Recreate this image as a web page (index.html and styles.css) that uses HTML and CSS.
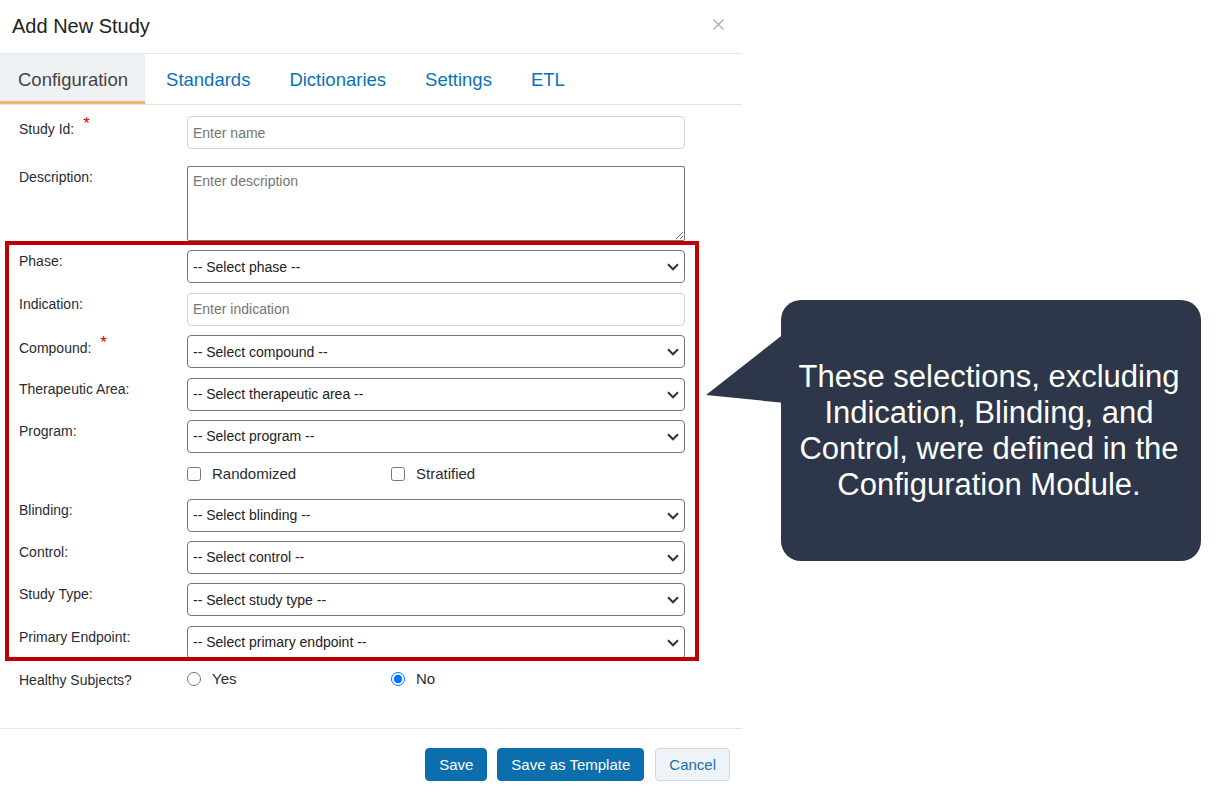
FILE: index.html
```html
<!DOCTYPE html>
<html lang="en">
<head>
  <meta charset="UTF-8" />
  <meta name="viewport" content="width=device-width, initial-scale=1.0" />
  <title>Add New Study</title>
  <link rel="stylesheet" href="styles.css">
</head>
<body>
  <div class="page">
    <div class="modal">
      <div class="modal-header">
        <h1 class="modal-title">Add New Study</h1>
        <button class="close" aria-label="Close">
          <svg width="11" height="11" viewBox="0 0 11 11"><path d="M0.5 0.5 L10.5 10.5 M10.5 0.5 L0.5 10.5" stroke="#a8a8a8" stroke-width="1.2" fill="none"/></svg>
        </button>
      </div>

      <nav class="tabs">
        <a href="#" class="tab active">Configuration</a>
        <a href="#" class="tab">Standards</a>
        <a href="#" class="tab">Dictionaries</a>
        <a href="#" class="tab">Settings</a>
        <a href="#" class="tab">ETL</a>
      </nav>

      <form class="form">
        <div class="row row-id">
          <label>Study Id: <span class="req">*</span></label>
          <div class="control"><input type="text" placeholder="Enter name"></div>
        </div>
        <div class="row">
          <label>Description:</label>
          <div class="control"><textarea placeholder="Enter description"></textarea></div>
        </div>
        <div class="row">
          <label>Phase:</label>
          <div class="control select"><select><option>-- Select phase --</option></select><svg class="chev" width="12" height="8" viewBox="0 0 12 8"><path d="M1 1.3 L6 6.3 L11 1.3" stroke="#333" stroke-width="2" fill="none"/></svg></div>
        </div>
        <div class="row">
          <label>Indication:</label>
          <div class="control"><input type="text" placeholder="Enter indication"></div>
        </div>
        <div class="row">
          <label>Compound: <span class="req">*</span></label>
          <div class="control select"><select><option>-- Select compound --</option></select><svg class="chev" width="12" height="8" viewBox="0 0 12 8"><path d="M1 1.3 L6 6.3 L11 1.3" stroke="#333" stroke-width="2" fill="none"/></svg></div>
        </div>
        <div class="row">
          <label>Therapeutic Area:</label>
          <div class="control select"><select><option>-- Select therapeutic area --</option></select><svg class="chev" width="12" height="8" viewBox="0 0 12 8"><path d="M1 1.3 L6 6.3 L11 1.3" stroke="#333" stroke-width="2" fill="none"/></svg></div>
        </div>
        <div class="row">
          <label>Program:</label>
          <div class="control select"><select><option>-- Select program --</option></select><svg class="chev" width="12" height="8" viewBox="0 0 12 8"><path d="M1 1.3 L6 6.3 L11 1.3" stroke="#333" stroke-width="2" fill="none"/></svg></div>
        </div>
        <div class="row row-checks">
          <label></label>
          <div class="control options">
            <span class="option"><input type="checkbox"> Randomized</span>
            <span class="option"><input type="checkbox"> Stratified</span>
          </div>
        </div>
        <div class="row">
          <label>Blinding:</label>
          <div class="control select"><select><option>-- Select blinding --</option></select><svg class="chev" width="12" height="8" viewBox="0 0 12 8"><path d="M1 1.3 L6 6.3 L11 1.3" stroke="#333" stroke-width="2" fill="none"/></svg></div>
        </div>
        <div class="row">
          <label>Control:</label>
          <div class="control select"><select><option>-- Select control --</option></select><svg class="chev" width="12" height="8" viewBox="0 0 12 8"><path d="M1 1.3 L6 6.3 L11 1.3" stroke="#333" stroke-width="2" fill="none"/></svg></div>
        </div>
        <div class="row">
          <label>Study Type:</label>
          <div class="control select"><select><option>-- Select study type --</option></select><svg class="chev" width="12" height="8" viewBox="0 0 12 8"><path d="M1 1.3 L6 6.3 L11 1.3" stroke="#333" stroke-width="2" fill="none"/></svg></div>
        </div>
        <div class="row">
          <label>Primary Endpoint:</label>
          <div class="control select"><select><option>-- Select primary endpoint --</option></select><svg class="chev" width="12" height="8" viewBox="0 0 12 8"><path d="M1 1.3 L6 6.3 L11 1.3" stroke="#333" stroke-width="2" fill="none"/></svg></div>
        </div>
        <div class="row row-radios">
          <label>Healthy Subjects?</label>
          <div class="control options">
            <span class="option"><input type="radio" name="healthy"> Yes</span>
            <span class="option"><input type="radio" name="healthy" checked> No</span>
          </div>
        </div>

        <div class="highlight"></div>
      </form>

      <div class="modal-footer">
        <button class="btn btn-primary">Save</button>
        <button class="btn btn-primary">Save as Template</button>
        <button class="btn btn-light">Cancel</button>
      </div>
    </div>

    <svg class="pointer" width="80" height="80" viewBox="0 0 80 80"><polygon points="80,3 1,65 80,73" fill="#2d3749"/></svg>
    <div class="callout">
      These selections, excluding<br>
      Indication, Blinding, and<br>
      Control, were defined in the<br>
      Configuration Module.
    </div>
  </div>
</body>
</html>
```

FILE: styles.css
```css
* {
  box-sizing: border-box;
}
body {
  margin: 0;
  background: #fff;
  color: #333;
  font-family: 'Liberation Sans', Arial, sans-serif;
}
.page {
  position: relative;
  width: 1221px;
  height: 796px;
  overflow: hidden;
}
.modal {
  width: 742px;
  background: #fff;
}

/* header */
.modal-header {
  height: 54px;
  padding: 0 18px 1px 12px;
  border-bottom: 1px solid #e5e5e5;
  display: flex;
  align-items: center;
  justify-content: space-between;
}
.modal-title {
  margin: 0;
  font-size: 20px;
  font-weight: normal;
  color: #222;
}
.close {
  background: none;
  border: none;
  padding: 0;
  display: flex;
  margin-top: -4px;
}

/* tabs */
.tabs {
  display: flex;
  gap: 3px;
  height: 51px;
  border-bottom: 1px solid #e3e3e3;
}
.tab {
  padding: 5px 18px 0;
  display: flex;
  align-items: center;
  font-size: 18.5px;
  color: #0a72b5;
  text-decoration: none;
  border-bottom: 3px solid transparent;
}
.tab.active {
  background: #eef2f5;
  color: #444;
  border-bottom-color: #f8b36c;
  padding-right: 17px;
}

/* form */
.form {
  position: relative;
  padding: 11px 57px 0 19px;
}
.row {
  display: flex;
  margin-bottom: 9.4px;
}
.row > label {
  width: 168px;
  flex-shrink: 0;
  padding-top: 3px;
  font-size: 14px;
  color: #2b2b33;
}
.req {
  color: #e00000;
  font-size: 17px;
  position: relative;
  top: -5px;
  margin-left: 5px;
}
.control {
  flex: 1;
}
.row-id {
  margin-bottom: 17px;
}
input[type=text], select, textarea {
  width: 100%;
  height: 33px;
  margin: 0;
  font-family: inherit;
  font-size: 14px;
  color: #222;
  background: #fff;
}
input[type=text] {
  border: 1px solid #ced4da;
  border-radius: 4px;
  padding: 0 5px 0;
}
textarea {
  display: block;
  height: 75px;
  border: 1px solid #767676;
  border-radius: 2px;
  padding: 6px 5px;
  resize: vertical;
}
::placeholder {
  color: #757575;
}
.select {
  position: relative;
}
select {
  appearance: none;
  -webkit-appearance: none;
  border: 1px solid #767676;
  border-radius: 4px;
  padding: 0 28px 0 5px;
}
.chev {
  position: absolute;
  right: 6px;
  top: 13px;
  pointer-events: none;
}
.row-checks {
  height: 20px;
  margin-top: 10.6px;
  margin-bottom: 15px;
}
.row-radios {
  margin-top: 10px;
}
.options {
  display: flex;
  align-items: center;
}
.option {
  width: 204px;
  display: flex;
  align-items: center;
  gap: 11px;
  font-size: 15px;
  color: #2b2b33;
}
.option input {
  margin: 0;
  width: 14px;
  height: 14px;
}
.row-radios .option {
  padding-top: 1px;
}

/* annotation box over the form */
.highlight {
  position: absolute;
  left: 5px;
  top: 136px;
  width: 694px;
  height: 420px;
  border: 4px solid #c00000;
  pointer-events: none;
}

/* footer */
.modal-footer {
  margin-top: 40px;
  border-top: 1px solid #e5e5e5;
  padding: 19px 12px;
  display: flex;
  justify-content: flex-end;
  gap: 10px;
}
.btn {
  height: 33px;
  padding: 0 13px;
  border-radius: 4px;
  font-family: inherit;
  font-size: 15px;
  cursor: pointer;
}
.btn-primary {
  background: #0b6ead;
  border: 1px solid #0b6ead;
  color: #fff;
}
.btn-light {
  background: #eef3f7;
  border: 1px solid #cfd8df;
  color: #1d6fae;
  margin-left: 1px;
}

/* callout */
.pointer {
  position: absolute;
  left: 705px;
  top: 330px;
}
.callout {
  position: absolute;
  left: 781px;
  top: 300px;
  width: 420px;
  height: 261px;
  border-radius: 20px;
  background: #2d3749;
  color: #fff;
  font-size: 31px;
  line-height: 36px;
  text-align: center;
  white-space: nowrap;
  display: flex;
  align-items: center;
  justify-content: center;
  padding: 0 4px 0 0;
}
```
